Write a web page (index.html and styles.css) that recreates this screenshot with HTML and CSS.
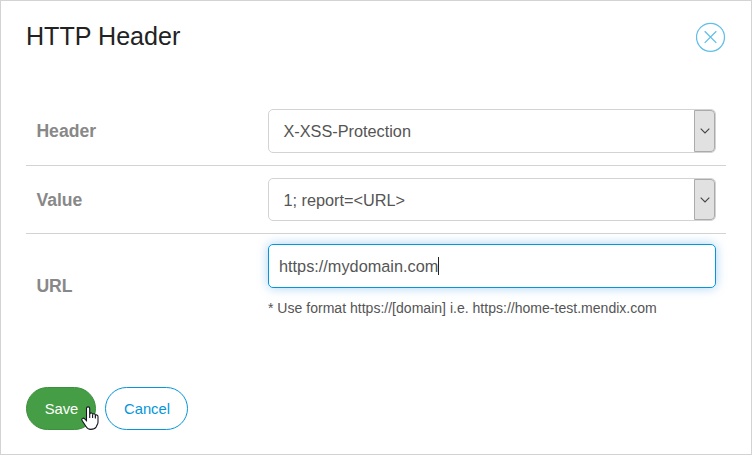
FILE: index.html
```html
<!DOCTYPE html>
<html lang="en">
<head>
<meta charset="utf-8">
<title>HTTP Header</title>
<link rel="stylesheet" href="styles.css">
</head>
<body>
<main class="dialog">
  <header class="dialog-header">
    <h1 class="title">HTTP Header</h1>
    <svg class="close" viewBox="0 0 30 30" role="img" aria-label="Close">
      <circle cx="14.5" cy="15.3" r="14"/>
      <path d="M8.7 9.3 20.3 20.9M20.3 9.3 8.7 20.9"/>
    </svg>
  </header>
  <div class="form">
    <div class="row">
      <div class="label">Header</div>
      <div class="select">
        <span class="select-value">X-XSS-Protection</span>
        <span class="select-button"><svg class="chevron" viewBox="0 0 10 6"><path d="M.7.7 5 5 9.3.7"/></svg></span>
      </div>
    </div>
    <div class="row row-value">
      <div class="label">Value</div>
      <div class="select">
        <span class="select-value">1; report=&lt;URL&gt;</span>
        <span class="select-button"><svg class="chevron" viewBox="0 0 10 6"><path d="M.7.7 5 5 9.3.7"/></svg></span>
      </div>
    </div>
    <div class="row row-url">
      <div class="label">URL</div>
      <div class="field">
        <div class="input"><span>https://mydomain.com</span><i class="caret"></i></div>
        <p class="hint">* Use format https://[domain] i.e. https://home-test.mendix.com</p>
      </div>
    </div>
  </div>
  <footer class="actions">
    <div class="button save">Save
      <svg class="pointer" viewBox="0 0 18 24"><path d="M5.5 14.6V2.6C5.5.3 8.7.3 8.7 2.6V8.2C9.3 6.3 11.6 6.6 11.6 8.6 12.2 7.2 14.4 7.5 14.4 9.5 15 8.5 17 8.8 17 10.7V16.2C17 18.3 15.5 19.4 15.2 21 14 22.9 11.8 23.4 9.7 23.4 7.6 23.4 6 22.5 5 20.6 3.7 18.2 2.2 16.3 1 14.2.2 12.5 2.4 11.5 3.7 12.8Z"/><path d="M8.7 8V12M11.6 8.6V12M14.4 9.5V12.5"/></svg>
    </div>
    <div class="button cancel">Cancel</div>
  </footer>
</main>
</body>
</html>
```
FILE: styles.css
```css
* { box-sizing: border-box; }

body {
  margin: 0;
  background: #fff;
  color: #555;
  font-family: "Liberation Sans", Arial, sans-serif;
}

.dialog {
  height: 455px;
  padding: 0 25px;
  border: 1px solid #d3d3d3;
}

.dialog-header {
  display: flex;
  align-items: flex-start;
  justify-content: space-between;
  height: 95px;
  padding-top: 21px;
}

.title {
  margin: 0;
  color: #222;
  font-size: 25.1px;
  font-weight: 400;
  line-height: 29px;
}

.close {
  width: 30px;
  height: 30px;
  fill: none;
  stroke: #62bee8;
  stroke-width: 1.3;
}

.row {
  display: grid;
  grid-template-columns: 232px 448px;
  align-items: center;
  height: 70px;
  padding: 0 10px;
  border-bottom: 1px solid #d3d3d3;
}

.row-value { height: 68px; }

.row-url {
  height: 103px;
  border-bottom: 0;
}

.label {
  padding-left: .4px;
  color: #888;
  font-size: 17.6px;
  font-weight: 700;
  line-height: 20px;
}

.select {
  display: flex;
  justify-content: space-between;
  height: 44px;
  margin-top: 1px;
  border: 1px solid #d3d3d3;
  border-radius: 5px;
  font-size: 16.3px;
  line-height: 42px;
}

.row-value .select {
  height: 43px;
  margin-top: 0;
}

.select-value { padding-left: 14.4px; }

.select-button {
  display: flex;
  align-items: center;
  justify-content: center;
  width: 21px;
  border: 1px solid #ababab;
  border-radius: 0 4px 4px 0;
  background: #e1e1e1;
}

.chevron {
  width: 10px;
  height: 6px;
  fill: none;
  stroke: #444;
  stroke-width: 1.1;
}

.field { align-self: start; padding-top: 10px; }

.input {
  display: flex;
  align-items: center;
  height: 44px;
  padding-left: 10px;
  border: 1px solid #0595db;
  border-radius: 5px;
  box-shadow: 0 0 11px rgba(5, 130, 219, .35);
  font-size: 16.3px;
}

.caret {
  width: 1px;
  height: 18px;
  background: #222;
}

.hint {
  margin: 12px 0 0;
  font-size: 14.06px;
  line-height: 16px;
  white-space: nowrap;
}

.actions {
  display: flex;
  gap: 9px;
  margin-top: 50px;
}

.button {
  position: relative;
  height: 43px;
  padding-left: 1px;
  border: 1px solid #0595db;
  border-radius: 22px;
  font-size: 14.8px;
  line-height: 42px;
  text-align: center;
}

.save {
  width: 70px;
  border-color: #3c8f3d;
  background: #459d45;
  color: #fff;
}

.cancel {
  width: 83px;
  color: #0595db;
}

.pointer {
  position: absolute;
  top: 18px;
  left: 54px;
  width: 18px;
  height: 24px;
  fill: #fff;
  stroke: #14141f;
  stroke-width: 1.1;
}
```
